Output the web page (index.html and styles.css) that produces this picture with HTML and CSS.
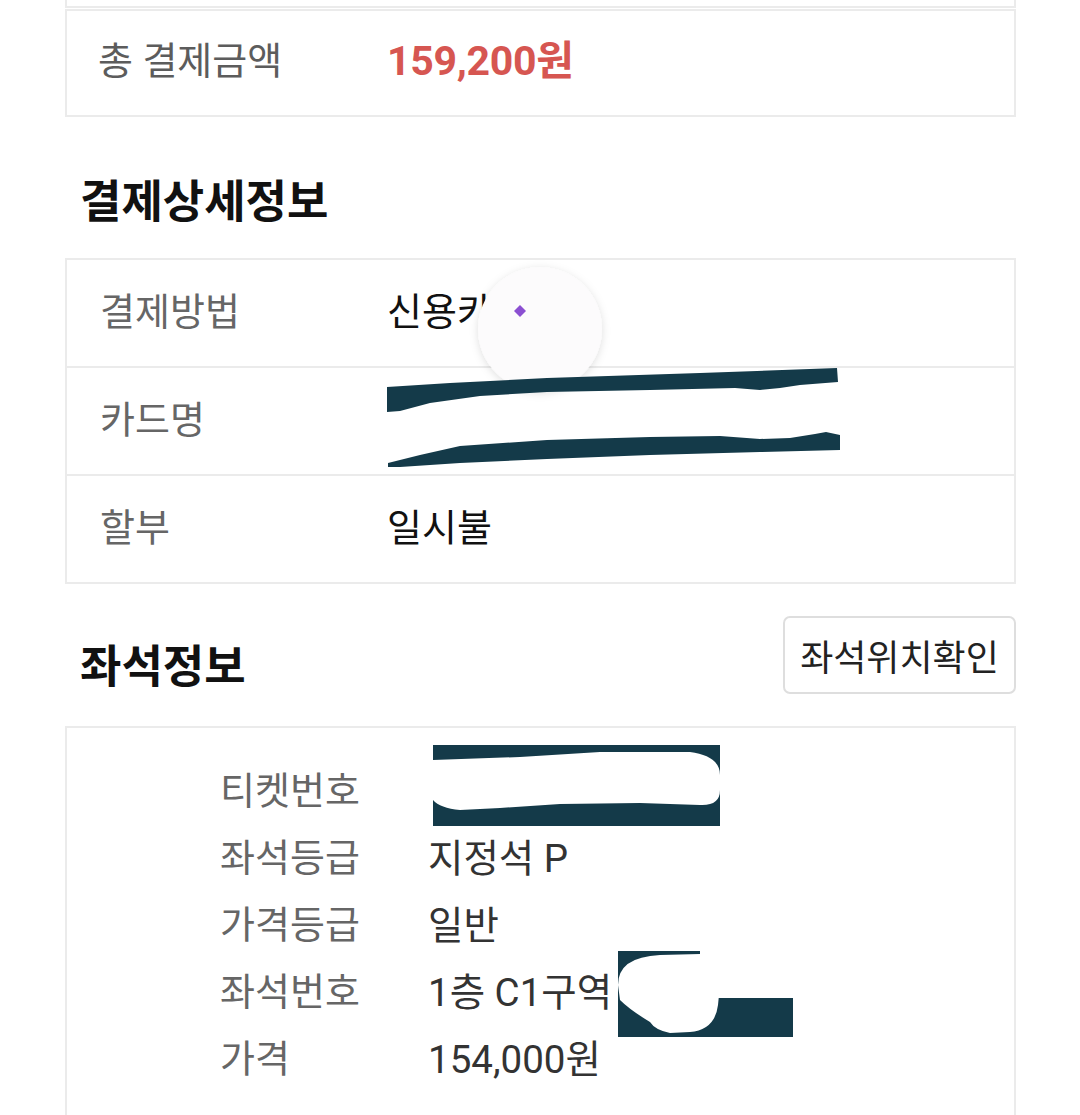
FILE: index.html
```html
<!DOCTYPE html>
<html lang="ko">
<head>
<meta charset="utf-8">
<link rel="stylesheet" href="styles.css">
</head>
<body>
<div class="page">
  <div class="card prev"></div>

  <div class="card total">
    <div class="row total-row">
      <span class="label">총 결제금액</span>
      <span class="amount">159,200원</span>
    </div>
  </div>

  <h2 class="heading detail-heading">결제상세정보</h2>

  <div class="card detail">
    <div class="row drow"><span class="label">결제방법</span><span class="value">신용카드</span></div>
    <div class="row drow"><span class="label">카드명</span><span class="value"></span></div>
    <div class="row drow"><span class="label">할부</span><span class="value">일시불</span></div>
  </div>

  <div class="seat-head">
    <h2 class="heading seat-heading">좌석정보</h2>
    <button class="seat-btn">좌석위치확인</button>
  </div>

  <div class="card seat">
    <div class="srow"><span class="slabel">티켓번호</span><span class="svalue"></span></div>
    <div class="srow"><span class="slabel">좌석등급</span><span class="svalue">지정석 P</span></div>
    <div class="srow"><span class="slabel">가격등급</span><span class="svalue">일반</span></div>
    <div class="srow"><span class="slabel">좌석번호</span><span class="svalue">1층 C1구역</span></div>
    <div class="srow"><span class="slabel">가격</span><span class="svalue">154,000원</span></div>
  </div>

  <svg class="overlay" width="1080" height="1115" viewBox="0 0 1080 1115">
    <defs>
      <filter id="sh" x="-30%" y="-30%" width="160%" height="160%">
        <feDropShadow dx="0" dy="2" stdDeviation="4" flood-color="#000" flood-opacity="0.13"/>
      </filter>
    </defs>
    <circle cx="540" cy="329" r="62" fill="#fcfbfc" filter="url(#sh)"/>
    <path d="M514,311 L520,305 L526,311 L520,317 Z" fill="#8b4fd1"/>
    <path d="M387,387 L450,383 L547,378 L700,373 L837,368 L838,382 L800,385 L780,388 L760,390 L735,388 L650,390 L547,392 L480,396 L430,403 L400,411 L387,412 Z" fill="#143a49"/>
    <path d="M388,463 L420,455 L460,446 L547,440 L650,437 L720,436 L760,439 L790,438 L815,434 L826,432 L840,435 L840,450 L760,452 L650,455 L547,459 L460,463 L400,467 L388,467 Z" fill="#143a49"/>
    <rect x="433" y="745" width="287" height="81" fill="#143a49"/>
    <path d="M433,760 L520,757 L600,752 L690,752 Q720,756 720,775 L720,790 Q720,806 700,805 L640,803 L560,804 L500,808 L460,810 Q440,808 433,800 Z" fill="#fff"/>
    <rect x="618" y="951" width="82" height="86" fill="#143a49"/>
    <rect x="650" y="998" width="143" height="39" fill="#143a49"/>
    <path d="M618,985 Q618,957 660,955 L700,954 Q722,960 720,985 L718,1005 Q715,1030 690,1032 L670,1033 Q655,1030 650,1022 Q630,1010 620,1000 Z" fill="#fff"/>
  </svg>
</div>
</body>
</html>
```
FILE: styles.css
```css
html, body {
  margin: 0;
  padding: 0;
  background: #ffffff;
  overflow: hidden;
}
body {
  width: 1080px;
  height: 1115px;
  font-family: "Roboto", "Noto Sans CJK KR", "Noto Sans", sans-serif;
}
.page {
  position: relative;
  width: 1080px;
  height: 1115px;
  padding: 0 64px 0 65px;
  box-sizing: border-box;
}
.card {
  border: 2px solid #ebebeb;
  background: #fff;
  box-sizing: border-box;
}
.prev {
  height: 8px;
  border-top: none;
  margin-bottom: 1px;
}
.total {
  height: 108px;
}
.row {
  display: flex;
  align-items: center;
  padding-left: 31px;
  box-sizing: border-box;
}
.total-row {
  height: 104px;
  padding-bottom: 12px;
}
.label {
  width: 289px;
  font-size: 38px;
  color: #5c5c5c;
  flex-shrink: 0;
}
.amount {
  font-size: 41px;
  font-weight: 700;
  color: #d65651;
  letter-spacing: -0.3px;
}
.heading {
  margin: 0;
  font-size: 45px;
  font-weight: 700;
  color: #111;
  line-height: 56px;
  padding-left: 15px;
}
.detail-heading {
  margin-top: 58px;
  margin-bottom: 27px;
}
.detail .drow {
  height: 106px;
  padding-left: 33px;
  padding-bottom: 10px;
}
.detail .drow + .drow {
  border-top: 2px solid #ebebeb;
  height: 108px;
}
.detail .label {
  width: 287px;
  color: #666;
}
.value {
  font-size: 38px;
  color: #111;
}
.seat-head {
  display: flex;
  justify-content: space-between;
  align-items: center;
  margin-top: 32px;
  height: 78px;
}
.seat-heading {
  margin-top: 26px;
}
.seat-btn {
  width: 233px;
  height: 78px;
  border: 2px solid #dedede;
  border-radius: 7px;
  background: #fff;
  font-family: "Noto Sans CJK KR", sans-serif;
  font-size: 36px;
  color: #222;
  padding: 0;
}
.seat {
  margin-top: 32px;
  padding-top: 26px;
  padding-left: 153px;
  height: 420px;
  border-bottom: none;
}
.srow {
  display: flex;
  align-items: center;
  height: 67px;
}
.slabel {
  width: 208px;
  font-size: 38px;
  color: #666;
  flex-shrink: 0;
}
.svalue {
  font-size: 38.5px;
  color: #333;
}
.overlay {
  position: absolute;
  left: 0;
  top: 0;
  pointer-events: none;
}
```
